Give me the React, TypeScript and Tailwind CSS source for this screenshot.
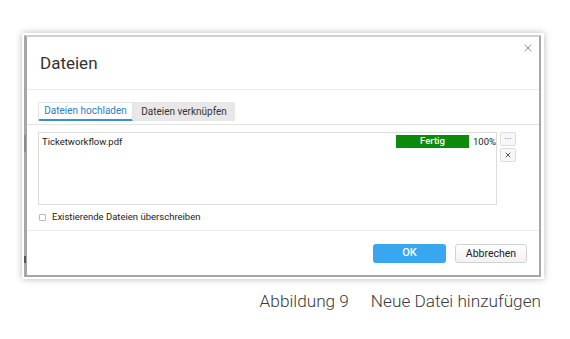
import { X } from "lucide-react"

export default function App() {
  return (
    <div className="w-[570px] h-[339px] bg-white font-['Roboto',sans-serif] text-[#333] overflow-hidden">
      <div className="pt-[33px] pl-[22px]">
        {/* Screenshot frame */}
        <div className="w-[522px] h-[246px] bg-white pt-[2px] pl-[2px] pr-[3px] pb-[2px] shadow-[0_0_7px_rgba(0,0,0,0.28)]">
          <div className="h-full flex flex-col border-l-[3px] border-r-2 border-b-2 border-t-2 border-[#a6a6a6] border-t-[#cfcfcf] bg-white relative">
            <span className="absolute left-[-3px] top-[98px] w-[2px] h-[17px] bg-[#8a8a8a]" />
            <span className="absolute left-[-3px] top-[219px] w-[2px] h-[7px] bg-[#555]" />

            {/* Header */}
            <div className="h-[53px] flex items-center pl-[13px] pr-[6px] border-b border-[#ececec] relative">
              <h2 className="text-[17px] text-[#333] leading-none">Dateien</h2>
              <button className="absolute right-[5px] top-[5px] text-[#8f8f8f]">
                <X className="w-[12px] h-[12px]" strokeWidth={2} />
              </button>
            </div>

            {/* Tabs */}
            <div className="h-[35px] border-b border-[#e2e2e2] pl-[11px] pt-[7px]">
              <div className="inline-flex h-[19px] bg-[#e8e8e8] rounded-[2px] text-[10px]">
                <div className="w-[95px] flex items-center justify-center bg-white border border-[#e4e4e4] border-b-2 border-b-[#3c8fd0] text-[#2f7dc0] rounded-l-[2px]">
                  Dateien hochladen
                </div>
                <div className="w-[102px] flex items-center justify-center text-[#333]">
                  Dateien verknüpfen
                </div>
              </div>
            </div>

            {/* Body */}
            <div className="pl-[11px] pt-[7px] flex-1">
              <div className="flex gap-[3px]">
                <div className="w-[459px] h-[73px] border border-[#dcdcdc] flex items-start pl-[3px] pt-[2px] text-[9.5px] text-[#222]">
                  <span className="flex-1 leading-[13px]">Ticketworkflow.pdf</span>
                  <div className="w-[73px] h-[13px] bg-[#0b8a0b] text-white text-[9.5px] font-medium flex items-center justify-center">
                    Fertig
                  </div>
                  <span className="w-[27px] pl-[4px] leading-[13px]">100%</span>
                </div>
                <div className="flex flex-col gap-[2px]">
                  <button className="w-[16px] h-[14px] border border-[#dedede] rounded-[2px] bg-[#f7f7f7] text-[9px] leading-none text-[#555] flex items-center justify-center">
                    ···
                  </button>
                  <button className="w-[16px] h-[14px] border border-[#dedede] rounded-[2px] bg-[#f7f7f7] text-[#555] flex items-center justify-center">
                    <X className="w-[8px] h-[8px]" strokeWidth={3} />
                  </button>
                </div>
              </div>
              <label className="flex items-center gap-[6px] mt-[5px] pl-[1px] text-[9.5px] text-[#222]">
                <span className="w-[7px] h-[7px] border border-[#bbb] rounded-[1px] bg-white" />
                Existierende Dateien überschreiben
              </label>
            </div>

            {/* Footer */}
            <div className="h-[45px] border-t border-[#ececec] flex items-start justify-end gap-[9px] pr-[12px] pt-[13px]">
              <button className="w-[73px] h-[19px] rounded-[3px] bg-[#38a7f0] text-white text-[11px] font-medium">
                OK
              </button>
              <button className="w-[72px] h-[19px] rounded-[3px] border border-[#d2d2d2] bg-gradient-to-b from-white to-[#f2f2f2] text-[#222] text-[10.5px]">
                Abbrechen
              </button>
            </div>
          </div>
        </div>
      </div>

      {/* Caption */}
      <div className="flex justify-end gap-[22px] pr-[29px] mt-[10px] text-[17.2px] font-light text-[#3a3a3a]">
        <span>Abbildung 9</span>
        <span>Neue Datei hinzufügen</span>
      </div>
    </div>
  )
}
